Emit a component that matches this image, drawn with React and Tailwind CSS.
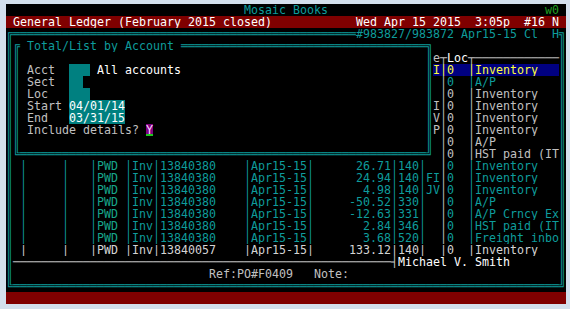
const TEAL = 'text-[#0e9c9c]';
const GRAY = 'text-[#c0c0c0]';
const WHITE = 'text-white';

const sp = (n) => ' '.repeat(n);
const dbl = (n) => '═'.repeat(n);

function Row({ parts, className = '' }) {
  return (
    <div className={`h-[12px] overflow-hidden whitespace-pre ${className}`}>
      {parts.map(([text, cls], i) => (
        <span key={i} className={cls}>
          {text}
        </span>
      ))}
    </div>
  );
}

const entries = [
  ['13840380', '26.71', '140', '  ', 'Inventory'],
  ['13840380', '24.94', '140', 'FI', 'Inventory'],
  ['13840380', '4.98', '140', 'JV', 'Inventory'],
  ['13840380', '-50.52', '330', '  ', 'A/P'],
  ['13840380', '-12.63', '331', '  ', 'A/P Crncy Ex'],
  ['13840380', '2.84', '346', '  ', 'HST paid (IT'],
  ['13840380', '3.68', '520', '  ', 'Freight inbo'],
];

function sideParts(type, desc, cls) {
  return [
    [type, GRAY],
    ['│', GRAY],
    ['0', cls],
    ['  ', ''],
    ['│', cls],
    [desc.padEnd(12), cls],
  ];
}

function ledgerRow(e, last) {
  const c = last ? 'text-[#d4d4d4]' : TEAL;
  const bar = last ? '|' : '│';
  const line = last ? 'text-[#c8c8c8]' : TEAL;
  const pwd = last ? c : 'text-[#17a58a]';
  return [
    ['║', TEAL],
    [' ', ''],
    [bar, line],
    [sp(5), ''],
    [bar, line],
    [sp(3), ''],
    [bar, line],
    ['PWD', pwd],
    [' ', ''],
    [bar, line],
    ['Inv', c],
    [bar, line],
    [e[0], c],
    [sp(4), ''],
    [bar, line],
    ['Apr15-15', c],
    [bar, line],
    [e[1].padStart(11), c],
    [bar, line],
    [e[2], c],
    [bar, line],
    [e[3], c],
    [bar, last ? line : GRAY],
    ['0', c],
    ['  ', ''],
    [bar, line],
    [e[4].padEnd(12), c],
    ['║', TEAL],
  ];
}

// left half of the form rows (inside the Total/List box), then the side list
const form = [
  [[' Acct  ', GRAY], ['   ', 'field'], [' ', ''], ['All accounts', WHITE], [sp(35), '']],
  [[' Sect  ', GRAY], ['  ', 'field'], [sp(49), '']],
  [[' Loc   ', GRAY], ['   ', 'field'], [sp(48), '']],
  [[' Start ', GRAY], ['04/01/14', 'field'], [sp(43), '']],
  [[' End   ', GRAY], ['03/31/15', 'field'], [sp(43), '']],
  [[' Include details? ', GRAY], ['Y', 'cursor'], [sp(39), '']],
  [[sp(58), '']],
];

const side = [
  ['I', 'Inventory', 'hl'],
  [' ', 'A/P', TEAL],
  [' ', 'Inventory', GRAY],
  ['I', 'Inventory', GRAY],
  ['V', 'Inventory', GRAY],
  ['P', 'Inventory', GRAY],
  [' ', 'A/P', GRAY],
];

function FormRow({ left, right }) {
  return (
    <div className="h-[12px] overflow-hidden whitespace-pre">
      <span className={TEAL}>║║</span>
      {left.map(([t, c], i) => {
        if (c === 'field')
          return (
            <span key={i} className="inline-block h-[12px] align-top bg-[#008080] text-white">
              {t}
            </span>
          );
        if (c === 'cursor')
          return (
            <span
              key={i}
              className="inline-block h-[12px] align-top bg-[#800080] text-[#ffd8ff] shadow-[inset_0_-2px_0_#1ec81e]"
            >
              {t}
            </span>
          );
        return (
          <span key={i} className={c}>
            {t}
          </span>
        );
      })}
      <span className={TEAL}>║</span>
      {right[2] === 'hl' ? (
        <span className="inline-block h-[12px] align-top bg-[#000080] text-[#ffff3c]">
          {right[0]}│0  │{right[1].padEnd(12)}
        </span>
      ) : (
        sideParts(...right).map(([t, c], i) => (
          <span key={i} className={c}>
            {t}
          </span>
        ))
      )}
      <span className={TEAL}>║</span>
    </div>
  );
}

export default function App() {
  return (
    <div className="w-[570px] h-[309px] bg-[#d3dfec] pt-[4px] pl-[6px]">
      <div className="w-[560px] h-[300px] overflow-hidden bg-black font-['DejaVu_Sans_Mono',monospace] text-[11.63px] leading-[12px]">
        <Row
          parts={[
            [sp(34), ''],
            ['Mosaic Books', TEAL],
            [sp(31), ''],
            ['w0', 'text-[#22a022]'],
          ]}
        />
        <Row
          className="bg-[#800000] text-white"
          parts={[
            [' General Ledger (February 2015 closed)', ''],
            [sp(12), ''],
            ['Wed Apr 15 2015  3:05p  #16 N', ''],
          ]}
        />
        <Row
          className={TEAL}
          parts={[
            ['╔' + dbl(49), ''],
            ['#983827/983872 Apr15-15 Cl  H', ''],
            ['╗', ''],
          ]}
        />
        <Row
          parts={[
            ['║╔ ', TEAL],
            ['Total/List by Account', TEAL],
            [' ' + dbl(35) + '╗', TEAL],
            [sp(18), ''],
            ['║', TEAL],
          ]}
        />
        <Row
          parts={[
            ['║║' + sp(58) + '║', TEAL],
            ['e┬', GRAY],
            ['Loc', WHITE],
            ['┬' + '─'.repeat(12), GRAY],
            ['║', TEAL],
          ]}
        />
        {form.map((left, i) => (
          <FormRow key={i} left={left} right={side[i]} />
        ))}
        <Row
          parts={[
            ['║╚' + dbl(58) + '╝', TEAL],
            ...sideParts(' ', 'HST paid (IT', GRAY),
            ['║', TEAL],
          ]}
        />
        {entries.map((e, i) => (
          <Row key={i} parts={ledgerRow(e, false)} />
        ))}
        <Row parts={ledgerRow(['13840057', '133.12', '140', '  ', 'Inventory'], true)} />
        <Row
          parts={[
            ['║', TEAL],
            ['─'.repeat(54) + '┤', 'text-[#c8c8c8]'],
            ['Michael V. Smith', WHITE],
            [sp(7), ''],
            ['║', TEAL],
          ]}
        />
        <Row
          parts={[
            ['║', TEAL],
            [sp(28), ''],
            ['Ref:PO#F0409   Note:', GRAY],
            [sp(30), ''],
            ['║', TEAL],
          ]}
        />
        <Row className={TEAL} parts={[['╚' + dbl(78) + '╝', '']]} />
        <Row className="bg-[#800000]" parts={[[sp(80), '']]} />
      </div>
    </div>
  );
}
